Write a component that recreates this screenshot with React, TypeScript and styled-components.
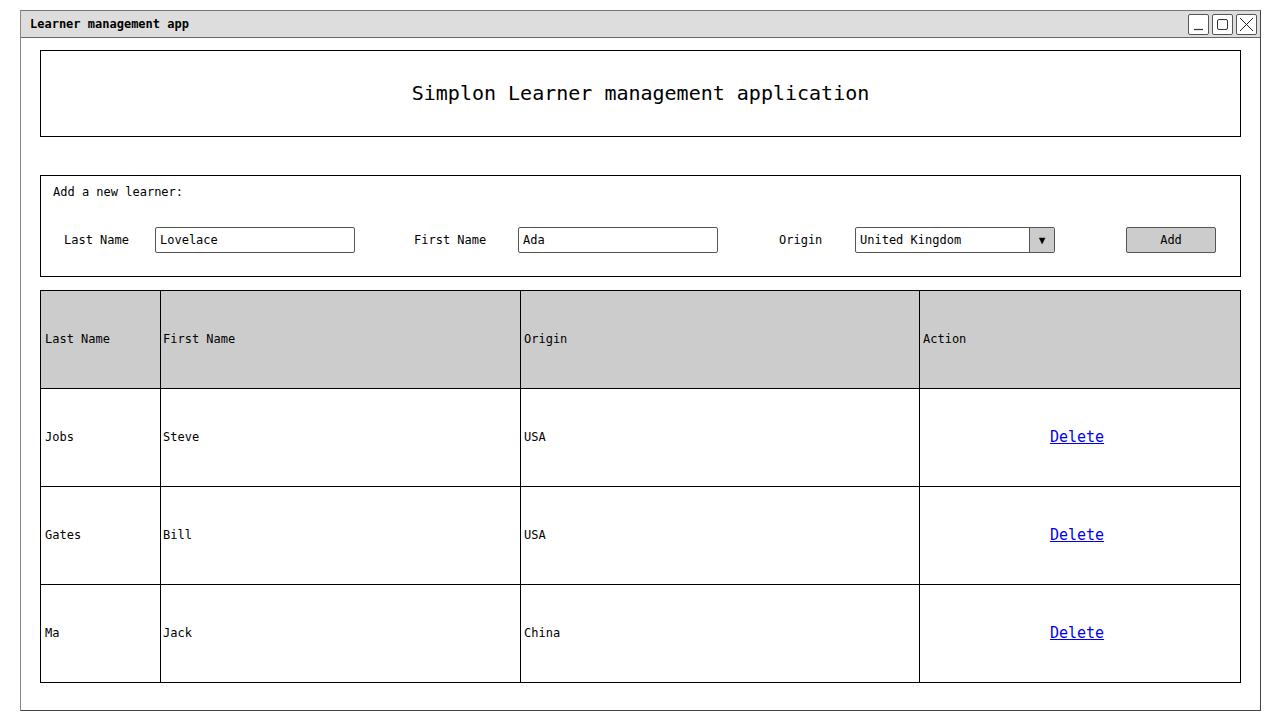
import React from "react";
import styled, { createGlobalStyle } from "styled-components";

const Global = createGlobalStyle`
  html, body { margin: 0; padding: 0; background: #fff; }
  body { font-family: "DejaVu Sans Mono", "Liberation Mono", monospace; color: #000; }
`;

const Window = styled.div`
  box-sizing: border-box;
  margin: 10px 20px;
  width: 1241px;
  height: 701px;
  border: 1px solid #444;
  border-left-color: #888;
  border-top-color: #777;
  display: flex;
  flex-direction: column;
`;

const TitleBar = styled.div`
  box-sizing: border-box;
  height: 27px;
  background: #dddddd;
  border-bottom: 1px solid #666;
  display: flex;
  align-items: center;
  justify-content: space-between;
  padding: 0 3px 0 9px;
`;

const TitleText = styled.span`
  font-size: 12px;
  font-weight: bold;
`;

const WinButtons = styled.div`
  display: flex;
  gap: 3px;
  margin-top: 1px;
`;

const WinButton = styled.div`
  box-sizing: border-box;
  width: 21px;
  height: 21px;
  border: 1px solid #555;
  border-radius: 2px;
  background: #fff;
  display: flex;
  align-items: center;
  justify-content: center;
`;

const Content = styled.div`
  padding: 12px 19px 0 19px;
  display: flex;
  flex-direction: column;
`;

const Header = styled.div`
  box-sizing: border-box;
  height: 87px;
  border: 1px solid #000;
  display: flex;
  align-items: center;
  justify-content: center;
  font-size: 20px;
  padding-bottom: 2px;
`;

const FormBox = styled.div`
  box-sizing: border-box;
  margin-top: 38px;
  height: 102px;
  border: 1px solid #000;
  padding: 9px 12px 0 12px;
`;

const FormTitle = styled.div`
  font-size: 12px;
  line-height: 14px;
`;

const FormRow = styled.div`
  margin-top: 28px;
  padding-left: 11px;
  display: grid;
  grid-template-columns: 91px 200px 59px 104px 200px 61px 76px 200px 71px 90px;
  align-items: center;
  font-size: 12px;
`;

const Label = styled.span`
  font-size: 12px;
`;

const Input = styled.div`
  box-sizing: border-box;
  height: 26px;
  border: 1px solid #555;
  border-radius: 2px;
  background: #fff;
  display: flex;
  align-items: center;
  padding-left: 4px;
  font-size: 12px;
`;

const Select = styled.div`
  box-sizing: border-box;
  height: 26px;
  border: 1px solid #555;
  border-radius: 2px;
  display: flex;
  align-items: stretch;
  font-size: 12px;
`;

const SelectText = styled.div`
  flex: 1;
  display: flex;
  align-items: center;
  padding-left: 4px;
`;

const SelectArrow = styled.div`
  width: 24px;
  border-left: 1px solid #555;
  background: #cccccc;
  display: flex;
  align-items: center;
  justify-content: center;
  font-size: 11px;
`;

const Button = styled.div`
  box-sizing: border-box;
  height: 26px;
  margin-top: -1px;
  border: 1px solid #555;
  border-radius: 2px;
  background: #cccccc;
  display: flex;
  align-items: center;
  justify-content: center;
  font-size: 12px;
`;

const Table = styled.table`
  margin-top: 13px;
  width: 1200px;
  border-collapse: collapse;
  table-layout: fixed;
  font-size: 12px;
`;

const Th = styled.th<{ $pl: number }>`
  height: 95px;
  background: #cccccc;
  border: 1px solid #000;
  text-align: left;
  font-weight: normal;
  padding: 0 0 2px ${(p) => p.$pl}px;
  vertical-align: middle;
`;

const Td = styled.td<{ $pl: number; $center?: boolean }>`
  height: 95px;
  border: 1px solid #000;
  padding: 0 ${(p) => (p.$center ? 6 : 0)}px 2px ${(p) => p.$pl}px;
  text-align: ${(p) => (p.$center ? "center" : "left")};
  vertical-align: middle;
`;

const DeleteLink = styled.a`
  color: #0000ee;
  text-decoration: underline;
  font-size: 15px;
  cursor: pointer;
`;

const columns = [
  { label: "Last Name", w: 120, pl: 4 },
  { label: "First Name", w: 360, pl: 2 },
  { label: "Origin", w: 399, pl: 3 },
  { label: "Action", w: 321, pl: 3 },
];

const learners = [
  ["Jobs", "Steve", "USA"],
  ["Gates", "Bill", "USA"],
  ["Ma", "Jack", "China"],
];

export default function App() {
  return (
    <>
      <Global />
      <Window>
        <TitleBar>
          <TitleText>Learner management app</TitleText>
          <WinButtons>
            <WinButton>
              <svg width="19" height="19" viewBox="0 0 19 19">
                <line x1="5" y1="14.5" x2="14" y2="14.5" stroke="#333" strokeWidth="1.2" />
              </svg>
            </WinButton>
            <WinButton>
              <svg width="19" height="19" viewBox="0 0 19 19">
                <rect x="4.5" y="4.5" width="10" height="10" rx="1.5" fill="none" stroke="#333" strokeWidth="1" />
              </svg>
            </WinButton>
            <WinButton>
              <svg width="19" height="19" viewBox="0 0 19 19">
                <line x1="3" y1="3" x2="16" y2="16" stroke="#222" strokeWidth="1" />
                <line x1="16" y1="3" x2="3" y2="16" stroke="#222" strokeWidth="1" />
              </svg>
            </WinButton>
          </WinButtons>
        </TitleBar>
        <Content>
          <Header>Simplon Learner management application</Header>
          <FormBox>
            <FormTitle>Add a new learner:</FormTitle>
            <FormRow>
              <Label>Last Name</Label>
              <Input>Lovelace</Input>
              <span />
              <Label>First Name</Label>
              <Input>Ada</Input>
              <span />
              <Label>Origin</Label>
              <Select>
                <SelectText>United Kingdom</SelectText>
                <SelectArrow>▼</SelectArrow>
              </Select>
              <span />
              <Button>Add</Button>
            </FormRow>
          </FormBox>
          <Table>
            <colgroup>
              {columns.map((c) => (
                <col key={c.label} style={{ width: c.w }} />
              ))}
            </colgroup>
            <thead>
              <tr>
                {columns.map((c) => (
                  <Th key={c.label} $pl={c.pl}>
                    {c.label}
                  </Th>
                ))}
              </tr>
            </thead>
            <tbody>
              {learners.map((r) => (
                <tr key={r[0]}>
                  <Td $pl={4}>{r[0]}</Td>
                  <Td $pl={2}>{r[1]}</Td>
                  <Td $pl={3}>{r[2]}</Td>
                  <Td $pl={0} $center>
                    <DeleteLink>Delete</DeleteLink>
                  </Td>
                </tr>
              ))}
            </tbody>
          </Table>
        </Content>
      </Window>
    </>
  );
}
